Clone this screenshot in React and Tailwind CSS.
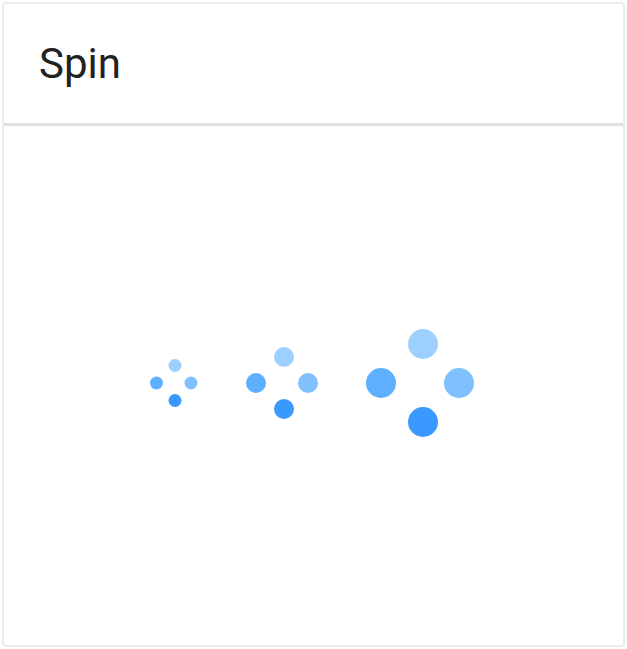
const spinners = [
  {
    size: 48,
    r: 6.5,
    dots: { top: [25, 6.5], right: [41, 24], bottom: [25, 41.5], left: [6.5, 24] },
  },
  {
    size: 72,
    r: 10,
    dots: { top: [38, 10], right: [62, 36], bottom: [38, 62], left: [10, 36] },
  },
  {
    size: 108,
    r: 15,
    dots: { top: [57, 15], right: [93, 54], bottom: [57, 93], left: [15, 54] },
  },
];

const colors = {
  top: '#9dcfff',
  right: '#80c0ff',
  left: '#5eb0ff',
  bottom: '#3a99ff',
};

function SpinDots({ size, r, dots }) {
  return (
    <svg width={size} height={size} viewBox={`0 0 ${size} ${size}`}>
      {Object.entries(dots).map(([key, [cx, cy]]) => (
        <circle key={key} cx={cx} cy={cy} r={r} fill={colors[key]} />
      ))}
    </svg>
  );
}

export default function App() {
  return (
    <div className="w-[627px] h-[649px] bg-white p-[2px] font-['Roboto',sans-serif]">
      <div className="h-full flex flex-col border-2 border-[#ececec] rounded-[4px] bg-white">
        <div className="h-[122px] shrink-0 flex items-center pl-[35px] border-b-[3px] border-[#e0e0e0]">
          <h2 className="text-[42px] leading-none text-[#222222] font-normal">Spin</h2>
        </div>
        <div className="flex-1 flex items-center justify-center gap-[48px] pb-[6px] pr-[3px]">
          {spinners.map((s, i) => (
            <SpinDots key={i} {...s} />
          ))}
        </div>
      </div>
    </div>
  );
}
